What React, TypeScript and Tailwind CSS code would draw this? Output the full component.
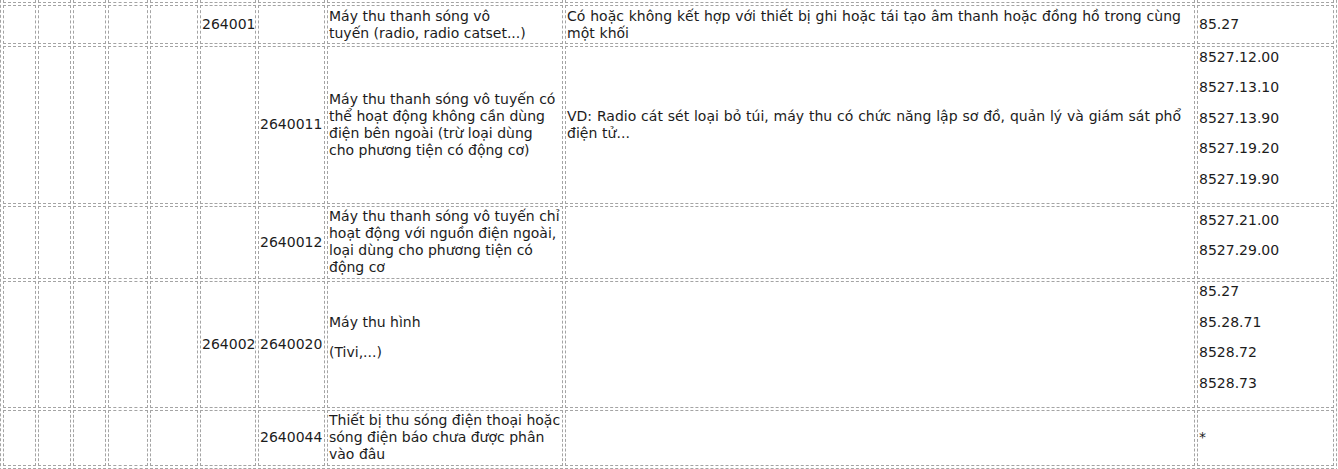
import React from "react";

const colCls = [
  "w-[33px]",
  "w-[33px]",
  "w-[33px]",
  "w-[40px]",
  "w-[48px]",
  "w-[56px]",
  "w-[67px]",
  "w-[236px]",
  "w-[630px] [word-spacing:0.4px]",
  "w-[137px]",
];

const tdBase =
  "border border-dashed border-[#a4a4a4] px-[1px] py-[1.5px] align-middle whitespace-nowrap";

type Row = { cells: React.ReactNode[]; h?: string };

function P({ children }: { children: React.ReactNode }) {
  return <p className="mb-[13.5px]">{children}</p>;
}

const rows: Row[] = [
  { cells: [], h: "h-[30px]" },
  {
    cells: [
      null,
      null,
      null,
      null,
      null,
      "264001",
      null,
      <>
        Máy thu thanh sóng vô
        <br />
        tuyến (radio, radio catset...)
      </>,
      <>
        Có hoặc không kết hợp với thiết bị ghi hoặc tái tạo âm thanh hoặc đồng hồ trong cùng
        <br />
        một khối
      </>,
      "85.27",
    ],
  },
  {
    cells: [
      null,
      null,
      null,
      null,
      null,
      null,
      "2640011",
      <>
        Máy thu thanh sóng vô tuyến có
        <br />
        thể hoạt động không cần dùng
        <br />
        điện bên ngoài (trừ loại dùng
        <br />
        cho phương tiện có động cơ)
      </>,
      <>
        VD: Radio cát sét loại bỏ túi, máy thu có chức năng lập sơ đồ, quản lý và giám sát phổ
        <br />
        điện tử...
      </>,
      <>
        <P>8527.12.00</P>
        <P>8527.13.10</P>
        <P>8527.13.90</P>
        <P>8527.19.20</P>
        <P>8527.19.90</P>
      </>,
    ],
  },
  {
    cells: [
      null,
      null,
      null,
      null,
      null,
      null,
      "2640012",
      <>
        Máy thu thanh sóng vô tuyến chỉ
        <br />
        hoạt động với nguồn điện ngoài,
        <br />
        loại dùng cho phương tiện có
        <br />
        động cơ
      </>,
      null,
      <>
        <P>8527.21.00</P>
        <P>8527.29.00</P>
      </>,
    ],
  },
  {
    cells: [
      null,
      null,
      null,
      null,
      null,
      "264002",
      "2640020",
      <>
        <P>Máy thu hình</P>
        <P>(Tivi,...)</P>
      </>,
      null,
      <>
        <P>85.27</P>
        <P>85.28.71</P>
        <P>8528.72</P>
        <P>8528.73</P>
      </>,
    ],
  },
  {
    cells: [
      null,
      null,
      null,
      null,
      null,
      null,
      "2640044",
      <>
        Thiết bị thu sóng điện thoại hoặc
        <br />
        sóng điện báo chưa được phân
        <br />
        vào đâu
      </>,
      null,
      "*",
    ],
  },
  { cells: [], h: "h-[40px]" },
];

export default function App() {
  return (
    <div className="w-[1338px] h-[469px] overflow-hidden bg-white font-['DejaVu_Sans',Verdana,sans-serif] text-[14px] leading-[17px] text-[#1c1c1c]">
      <table className="table-fixed border-separate border-spacing-[2px] border border-dashed border-[#a4a4a4] w-[1337px] mt-[-30px]">
        <tbody>
          {rows.map((r, ri) => (
            <tr key={ri}>
              {colCls.map((c, ci) => (
                <td key={ci} className={`${tdBase} ${c} ${r.h ?? ""}`}>
                  {r.cells[ci] ?? null}
                </td>
              ))}
            </tr>
          ))}
        </tbody>
      </table>
    </div>
  );
}
